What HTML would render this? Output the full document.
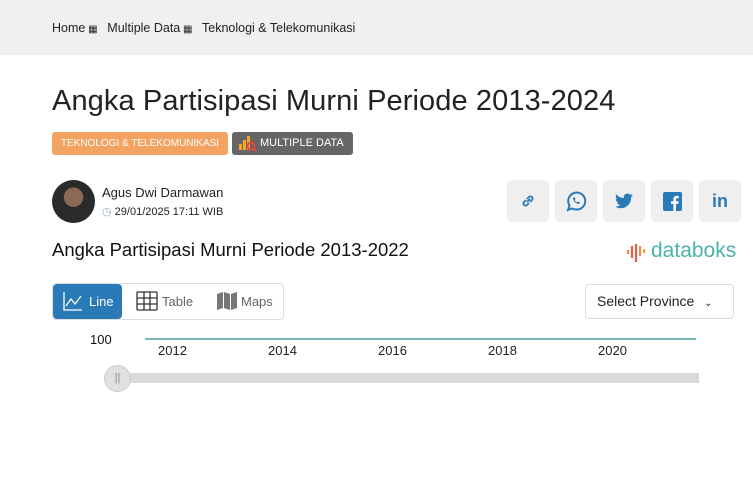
<!DOCTYPE html>
<html><head><meta charset="utf-8"><style>
*{margin:0;padding:0;box-sizing:border-box}
body{width:753px;height:498px;background:#fff;font-family:"Liberation Sans",sans-serif;color:#222;position:relative;overflow:hidden}
.a{position:absolute;white-space:nowrap}
.top{position:absolute;left:0;top:0;width:753px;height:55px;background:#f0f0f0}
.sb{position:absolute;top:180px;width:42px;height:42px;background:#efefef;border-radius:5px;display:flex;align-items:center;justify-content:center}
</style></head><body>
<div class="top"></div>
<div class="a" style="left:52px;top:21px;font-size:12.5px;color:#222">Home<span style="font-size:10px"> ▦ </span>&nbsp; Multiple Data<span style="font-size:10px"> ▦ </span>&nbsp; Teknologi &amp; Telekomunikasi</div>
<div class="a" style="left:52px;top:85px;font-size:29px;color:#222;letter-spacing:0.1px">Angka Partisipasi Murni Periode 2013-2024</div>
<div class="a" style="left:52px;top:132px;width:176px;height:23px;background:#f2a261;border-radius:3px;color:#fff;font-size:10px;text-align:center;line-height:23px">TEKNOLOGI &amp; TELEKOMUNIKASI</div>
<div class="a" style="left:232px;top:132px;width:121px;height:23px;background:#666;border-radius:3px;color:#fff;font-size:11px;line-height:23px;padding-left:28px">MULTIPLE DATA</div>
<svg class="a" style="left:238px;top:135px" width="20" height="18"><rect x="1" y="9" width="3" height="6" fill="#f5a623"/><rect x="5" y="5" width="3" height="10" fill="#f5a623"/><rect x="9" y="1" width="3" height="14" fill="#f5a623"/><circle cx="13" cy="11" r="3.5" fill="none" stroke="#e8453c" stroke-width="2"/><line x1="15.5" y1="13.5" x2="18" y2="16" stroke="#e8453c" stroke-width="2"/></svg>
<div class="a" style="left:52px;top:180px;width:43px;height:43px;border-radius:50%;background:radial-gradient(circle at 50% 40%,#8a6a55 0 28%,#2a2a2a 30% 100%)"></div>
<div class="a" style="left:102px;top:185px;font-size:13px;color:#222">Agus Dwi Darmawan</div>
<div class="a" style="left:102px;top:205px;font-size:11px;color:#222"><span style="color:#9ab">◷</span> 29/01/2025 17:11 WIB</div>
<div class="sb" style="left:507px"><svg width="16" height="16" viewBox="0 0 16 16" fill="none" stroke="#2a7ab8" stroke-width="1.8"><path d="M7 9l3-3M6 7l-2 2a2 2 0 003 3l2-2M10 9l2-2a2 2 0 00-3-3L7 6"/></svg></div>
<div class="sb" style="left:555px"><svg width="22" height="22" viewBox="0 0 22 22" fill="none" stroke="#2a7ab8" stroke-width="2"><path d="M3 20l1.5-4.5A8.5 8.5 0 1111 19.5a8.5 8.5 0 01-4-1z"/><path d="M8 8c0 3 3 6 6 6l1-1.5-2-1-1 1c-1-.5-2-1.5-2.5-2.5l1-1-1-2z" fill="#2a7ab8" stroke="none"/></svg></div>
<div class="sb" style="left:603px"><svg width="18" height="16" viewBox="0 0 24 20"><path fill="#2a7ab8" d="M24 2.4a10 10 0 01-2.8.8A5 5 0 0023.3.5a10 10 0 01-3.1 1.2A4.9 4.9 0 0011.8 6.2 14 14 0 011.7 1 4.9 4.9 0 003.2 7.6a4.9 4.9 0 01-2.2-.6 4.9 4.9 0 003.9 4.9 5 5 0 01-2.2.1 4.9 4.9 0 004.6 3.4A9.9 9.9 0 010 17.4 14 14 0 007.5 19.6c9.1 0 14-7.5 14-14v-.6A10 10 0 0024 2.4z"/></svg></div>
<div class="sb" style="left:651px"><svg width="19" height="19" viewBox="0 0 19 19"><rect width="19" height="19" rx="2" fill="#2a7ab8"/><path d="M13 19v-7h2.3l.4-2.7H13V7.6c0-.8.3-1.3 1.4-1.3h1.4V3.9c-.3 0-1.1-.1-2-.1-2 0-3.4 1.2-3.4 3.5v2H8.1V12h2.3v7z" fill="#fff"/></svg></div>
<div class="sb" style="left:699px;color:#2a7ab8;font-weight:bold;font-size:18px">in</div>
<div class="a" style="left:52px;top:239px;font-size:18.5px;color:#111">Angka Partisipasi Murni Periode 2013-2022</div>
<svg class="a" style="left:626px;top:241px" width="22" height="22"><g stroke-width="2.2"><line x1="2" y1="9" x2="2" y2="13" stroke="#f08a5d"/><line x1="6" y1="5" x2="6" y2="17" stroke="#e85d4a"/><line x1="10" y1="3" x2="10" y2="21" stroke="#e85d4a"/><line x1="14" y1="5" x2="14" y2="15" stroke="#f08a5d"/><line x1="18" y1="8" x2="18" y2="12" stroke="#f5a623"/></g></svg>
<div class="a" style="left:651px;top:239px;font-size:21px;color:#4bb3a7">databoks</div>
<div class="a" style="left:52px;top:283px;width:232px;height:37px;border:1px solid #ddd;border-radius:4px"></div>
<div class="a" style="left:53px;top:284px;width:69px;height:35px;background:#2a7ab8;border-radius:4px"></div>
<svg class="a" style="left:63px;top:291px" width="20" height="20" fill="none" stroke="#fff" stroke-width="1.3"><path d="M1 1v18h18M3 15l5-7 4 5 6-8"/></svg>
<div class="a" style="left:89px;top:294px;font-size:13px;color:#fff">Line</div>
<svg class="a" style="left:136px;top:291px" width="22" height="20" fill="none" stroke="#333" stroke-width="1.3"><rect x="1" y="1" width="20" height="18" rx="1"/><path d="M1 7h20M1 13h20M8 1v18M14 1v18"/></svg>
<div class="a" style="left:162px;top:294px;font-size:13px;color:#666">Table</div>
<svg class="a" style="left:217px;top:291px" width="20" height="19"><path fill="#777" d="M0 3l6-2v16l-6 2zM7 1l6 2v16l-6-2zM14 3l6-2v16l-6 2z"/></svg>
<div class="a" style="left:241px;top:294px;font-size:13px;color:#666">Maps</div>
<div class="a" style="left:585px;top:284px;width:149px;height:35px;border:1px solid #ddd;border-radius:4px;font-size:14px;color:#222;line-height:33px;padding-left:11px">Select Province <span style="font-size:10px;margin-left:6px">&#8964;</span></div>
<div class="a" style="left:90px;top:332px;font-size:13px;color:#111">100</div>
<div class="a" style="left:145px;top:338px;width:551px;height:2px;background:#7ab5b5"></div>
<div class="a" style="left:158px;top:343px;font-size:13px;color:#222">2012</div>
<div class="a" style="left:268px;top:343px;font-size:13px;color:#222">2014</div>
<div class="a" style="left:378px;top:343px;font-size:13px;color:#222">2016</div>
<div class="a" style="left:488px;top:343px;font-size:13px;color:#222">2018</div>
<div class="a" style="left:598px;top:343px;font-size:13px;color:#222">2020</div>
<div class="a" style="left:117px;top:373px;width:582px;height:10px;background:#d9d9d9"></div>
<div class="a" style="left:104px;top:365px;width:27px;height:27px;border-radius:50%;background:#e0e0e0;border:1px solid #ccc;text-align:center;line-height:25px;font-size:11px;color:#888">||</div>
</body></html>
